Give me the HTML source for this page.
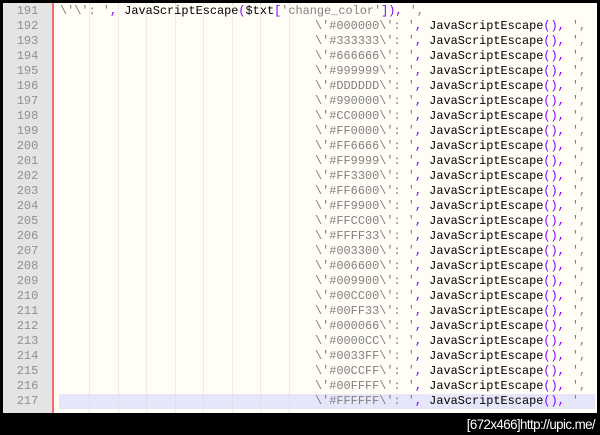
<!DOCTYPE html>
<html><head><style>
body{margin:0;width:600px;height:435px;background:#000;overflow:hidden;position:relative;font-family:"Liberation Mono",monospace}
#ed{position:absolute;left:3px;top:3px;width:594px;height:410px;background:#fffdf6;overflow:hidden}
#rb{position:absolute;left:595px;top:3px;width:2px;height:410px;background:#fff}
#gut{position:absolute;left:0;top:0;width:49px;height:410px;background:#e4e4e4}
#red{position:absolute;left:49px;top:0;width:2px;height:410px;background:#f07070}
.g{position:absolute;top:0;height:410px;border-left:1px dotted #d8d8d8}
.ln{position:absolute;left:0;width:49px;text-align:center;font-size:12px;color:#909090;height:15px;line-height:15px}
.l{position:absolute;left:57px;white-space:pre;font-size:11.9px;height:15px;line-height:15px;color:#000}
.s{color:#808080}.p{color:#8000ff}
#hl{position:absolute;left:56px;top:391px;width:540px;height:15px;background:#e6e6fa}
#cap{position:absolute;right:5px;top:416px;color:#fff;font-family:"Liberation Sans",sans-serif;font-size:14px;letter-spacing:-0.6px;transform:scaleX(0.95);transform-origin:right}
</style></head><body>
<div id="ed">
<div id="gut"></div><div id="red"></div>
<div id="hl"></div>
<div class="g" style="left:86px"></div><div class="g" style="left:115px"></div><div class="g" style="left:143px"></div><div class="g" style="left:172px"></div><div class="g" style="left:200px"></div><div class="g" style="left:229px"></div><div class="g" style="left:257px"></div><div class="g" style="left:286px"></div>
<div id="lines"></div>
</div>
<div id="rb"></div>
<div id="cap">[672x466]http://upic.me/</div>
<script>
var cols=["000000","333333","666666","999999","DDDDDD","990000","CC0000","FF0000","FF6666","FF9999","FF3300","FF6600","FF9900","FFCC00","FFFF33","003300","006600","009900","00CC00","00FF33","000066","0000CC","0033FF","00CCFF","00FFFF","FFFFFF"];
var h='';
for(var i=0;i<27;i++){var t=1+15*i;
h+='<div class="ln" style="top:'+t+'px">'+(191+i)+'</div>';
if(i==0){h+='<div class="l" style="top:'+t+'px"><span class="s">\\\'\\\': \'</span><span class="p">,</span> JavaScriptEscape<span class="p">(</span>$txt<span class="p">[</span><span class="s">\'change_color\'</span><span class="p">]),</span> <span class="s">\',</span></div>';}
else{var last=i==26;h+='<div class="l" style="top:'+t+'px;left:312px"><span class="s">\\\'#'+cols[i-1]+'\\\': \'</span><span class="p">,</span> JavaScriptEscape<span class="p">(),</span> <span class="s">\''+(last?'':',')+'</span></div>';}
}
document.getElementById('lines').innerHTML=h;
</script>
</body></html>
